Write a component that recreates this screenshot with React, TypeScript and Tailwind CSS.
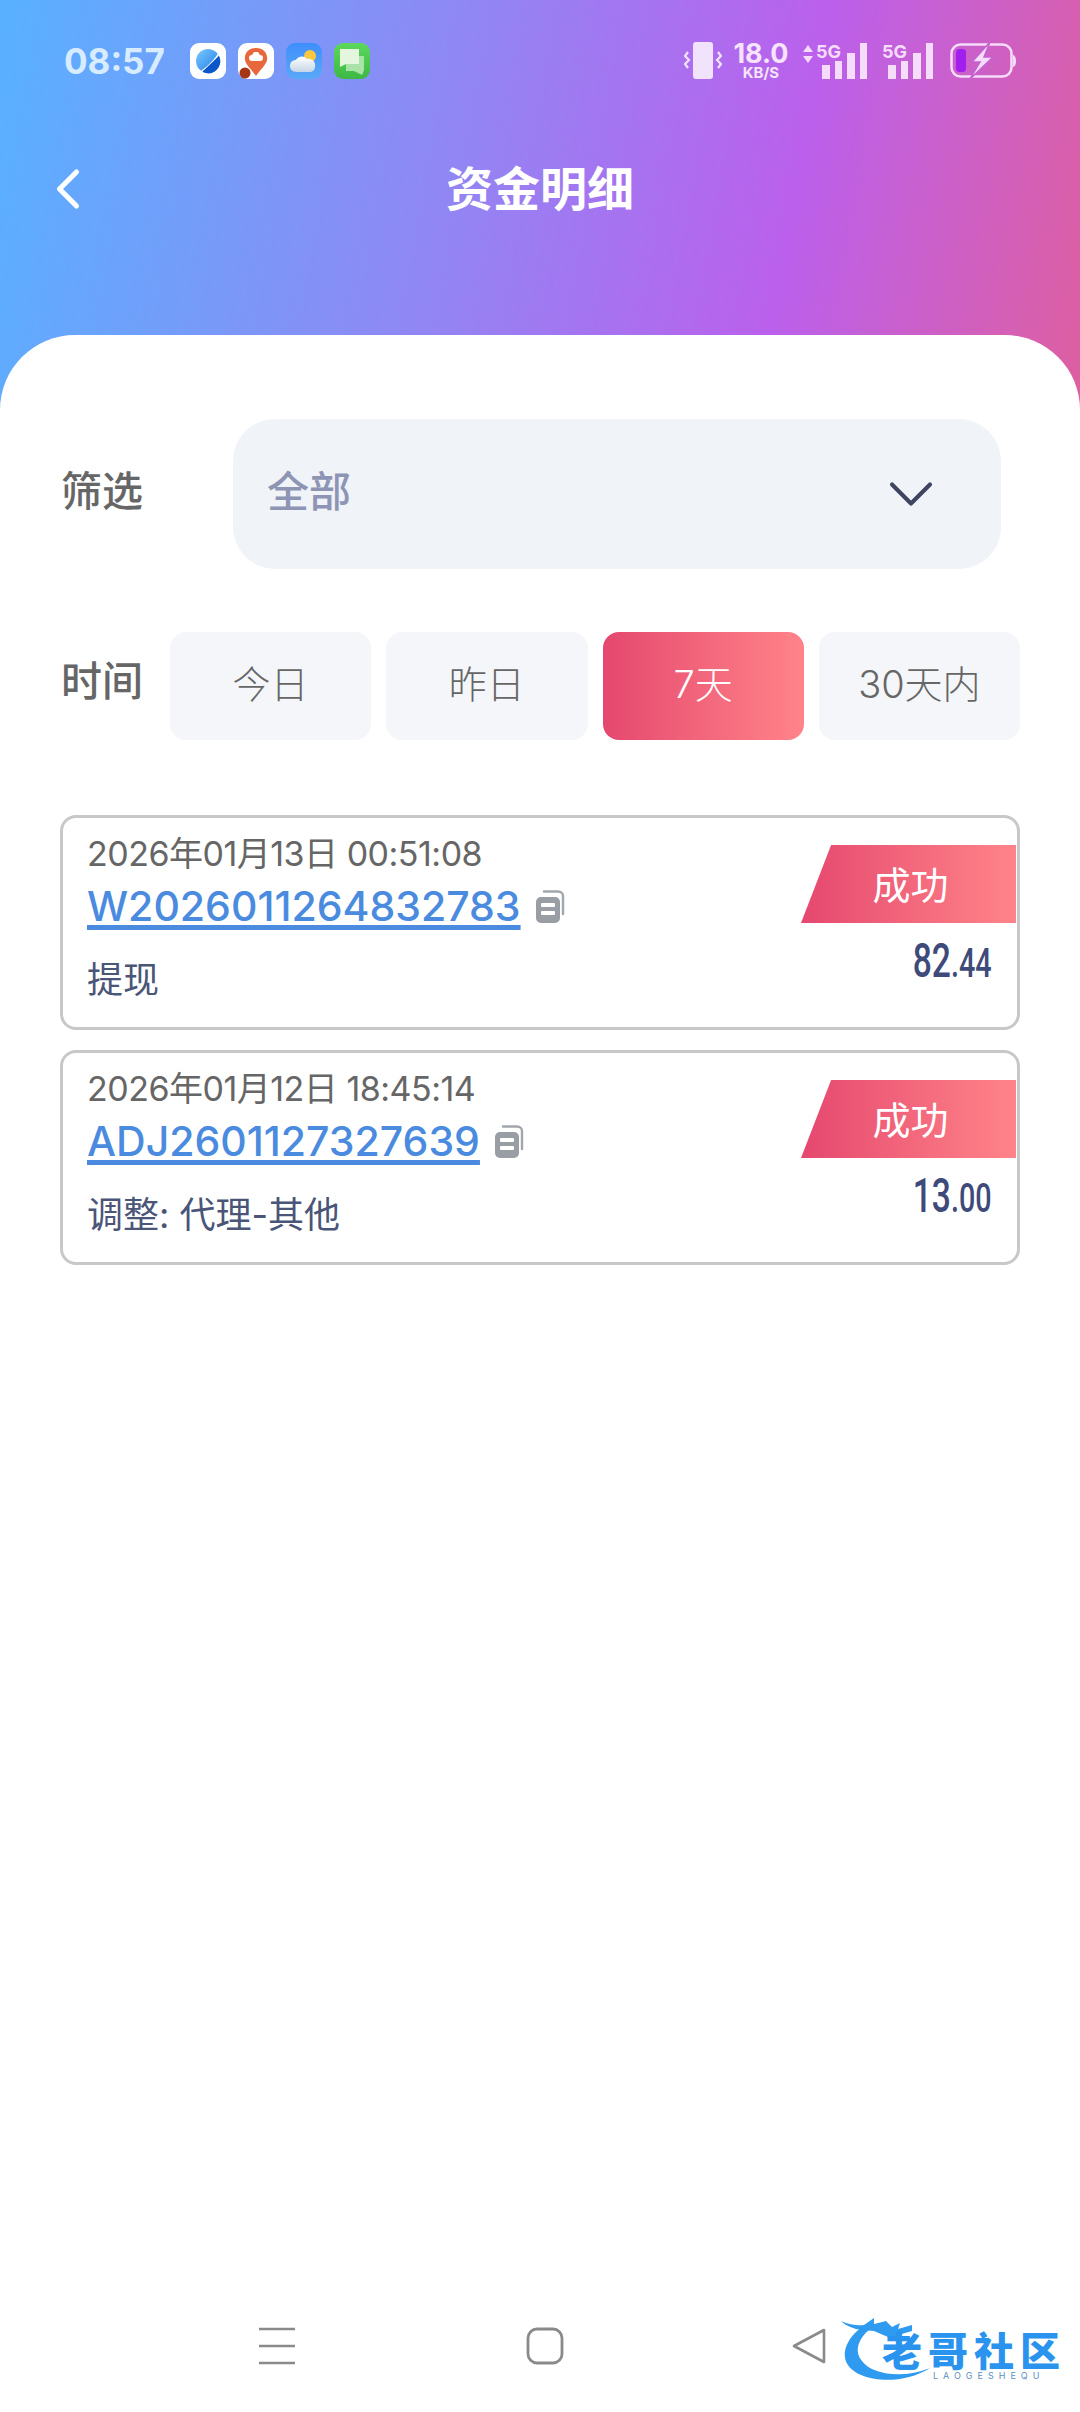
import { ChevronDown, ChevronLeft } from 'lucide-react';

const records = [
  { time: '2026年01月13日 00:51:08', id: 'W2026011264832783', whole: '82', fraction: '.44', note: '提现' },
  { time: '2026年01月12日 18:45:14', id: 'ADJ2601127327639', whole: '13', fraction: '.00', note: '调整: 代理-其他' },
];

const ranges = ['今日', '昨日', '7天', '30天内'];

function BrowserIcon() {
  return (
    <svg viewBox="0 0 36 36" className="h-[36px] w-[36px]">
      <defs>
        <linearGradient id="planet" x1="0" y1="0" x2="1" y2="1">
          <stop offset="0" stopColor="#7ccafb" />
          <stop offset="1" stopColor="#1a78e8" />
        </linearGradient>
      </defs>
      <rect width="36" height="36" rx="9" fill="#ffffff" />
      <circle cx="18" cy="18" r="12" fill="url(#planet)" />
      <path d="M5 31 C12 30 27 17 31 6" fill="none" stroke="#ffffff" strokeWidth="1.6" />
      <path d="M13 28 L29 13 A12 12 0 0 1 13 29 Z" fill="#0b57c9" />
    </svg>
  );
}

function CarPinIcon() {
  return (
    <svg viewBox="0 0 36 36" className="h-[36px] w-[36px]">
      <rect width="36" height="36" rx="9" fill="#ffffff" />
      <path d="M18 5 C10 5 6 11 7 17 C8 22 14 27 18 33 C22 27 28 22 29 17 C30 11 26 5 18 5 Z" fill="#e8683c" />
      <rect x="11" y="12" width="14" height="6" rx="3" fill="#ffffff" />
      <path d="M14 12 L16 9 H20 L22 12 Z" fill="#ffffff" />
      <circle cx="7" cy="30" r="5.5" fill="#a83416" />
    </svg>
  );
}

function WeatherIcon() {
  return (
    <svg viewBox="0 0 36 36" className="h-[36px] w-[36px]">
      <defs>
        <linearGradient id="sky" x1="0" y1="0" x2="0" y2="1">
          <stop offset="0" stopColor="#3f8ffb" />
          <stop offset="1" stopColor="#5aa8f8" />
        </linearGradient>
        <linearGradient id="cloud" x1="0" y1="0" x2="0" y2="1">
          <stop offset="0" stopColor="#ffffff" />
          <stop offset="1" stopColor="#c6d6e4" />
        </linearGradient>
      </defs>
      <rect width="36" height="36" rx="9" fill="url(#sky)" />
      <circle cx="24" cy="13" r="6" fill="#fbc83f" />
      <path d="M11 29 C6 29 4 26 4 23 C4 19 7 17 10 17 C12 13 18 12 21 16 C26 15 30 19 29 24 C29 27 26 29 24 29 Z" fill="url(#cloud)" />
    </svg>
  );
}

function MessageIcon() {
  return (
    <svg viewBox="0 0 36 36" className="h-[36px] w-[36px]">
      <defs>
        <linearGradient id="msg" x1="0" y1="0" x2="0" y2="1">
          <stop offset="0" stopColor="#5cd85c" />
          <stop offset="1" stopColor="#3db845" />
        </linearGradient>
      </defs>
      <rect width="36" height="36" rx="9" fill="url(#msg)" />
      <path d="M12 13 H30 V27 L28 32 L20 28 H12 Z" fill="#a9e3a8" />
      <path d="M6 6 H25 V21 H12 L6 24 Z" fill="#e4f6de" />
    </svg>
  );
}

function SignalBars() {
  return (
    <svg viewBox="0 0 66 36" className="h-[36px] w-[66px] overflow-visible">
      <text x="0" y="15" fontSize="18" fontWeight="700" fill="#f6dcfb" fontFamily="Inter, sans-serif">5G</text>
      <rect x="6" y="22" width="8" height="14" fill="#f6dcfb" />
      <rect x="19" y="18" width="7" height="18" fill="#f6dcfb" />
      <rect x="31" y="10" width="8" height="26" fill="#f6dcfb" />
      <rect x="44" y="0" width="7" height="36" fill="#f6dcfb" />
    </svg>
  );
}

function StatusRight() {
  return (
    <div className="flex items-center">
      <svg viewBox="0 0 38 38" className="h-[38px] w-[38px]">
        <rect x="9" y="0" width="20" height="37" rx="3" fill="#f1e3fb" />
        <path d="M4 10 L1 14 L5 18 L1 22 L4 26" fill="none" stroke="#f1e3fb" strokeWidth="2.2" />
        <path d="M34 10 L37 14 L33 18 L37 22 L34 26" fill="none" stroke="#f1e3fb" strokeWidth="2.2" />
      </svg>
      <div className="ml-[11px] flex w-[56px] flex-col items-center font-bold text-[#f6e4fb]">
        <span className="text-[27px] leading-[24px]">18.0</span>
        <span className="text-[15px] leading-[14px]">KB/S</span>
      </div>
      <svg viewBox="0 0 12 18" className="mb-[14px] ml-[13px] h-[18px] w-[12px]">
        <path d="M6 0 L11 7 H1 Z M6 18 L1 11 H11 Z" fill="#f6dcfb" />
      </svg>
      <div className="ml-[2px]">
        <SignalBars />
      </div>
      <SignalBars />
      <svg viewBox="0 0 68 36" className="ml-[2px] h-[36px] w-[68px]">
        <rect x="1.5" y="1.5" width="60" height="32" rx="9" fill="none" stroke="#f6dcfb" strokeWidth="2.5" />
        <rect x="6" y="6" width="10" height="23" rx="3.5" fill="#a31ff0" />
        <path d="M63 12 C67 12 67 24 63 24 Z" fill="#f6dcfb" />
        <path d="M40 -1 L22 19 H30 L20 36 L43 14 H34 Z" fill="#f6dcfb" stroke="#c364d0" strokeWidth="1.5" />
      </svg>
    </div>
  );
}

function CopyIcon() {
  return (
    <svg viewBox="0 0 29 34" className="h-[34px] w-[29px] shrink-0">
      <path d="M8 2.5 H22 C25 2.5 27 4.5 27 7 V25" fill="none" stroke="#a2a6ac" strokeWidth="2.4" strokeLinecap="round" />
      <rect x="0" y="8" width="24" height="26" rx="5" fill="#999da4" />
      <rect x="5" y="14" width="14" height="4" rx="1" fill="#ffffff" />
      <rect x="5" y="22" width="14" height="4" rx="1" fill="#ffffff" />
    </svg>
  );
}

function RecordCard({ time, id, whole, fraction, note }: (typeof records)[number]) {
  return (
    <div className="flex h-[215px] justify-between rounded-[16px] border-[3px] border-[#c8c8c8] pr-px pl-[24px]">
      <div className="pt-[16px]">
        <div className="text-[34px] leading-[40px] tracking-[-0.5px] whitespace-nowrap text-[#666666]">{time}</div>
        <div className="mt-[7px] flex items-center gap-[15px]">
          <span className="text-[41px] leading-[50px] font-medium whitespace-nowrap text-[#4a8be0] underline decoration-[5px] underline-offset-[4px]">{id}</span>
          <CopyIcon />
        </div>
        <div className="mt-[27px] text-[36px] leading-[44px] text-[#4a5578]">{note}</div>
      </div>
      <div className="flex flex-col items-end pt-[27px]">
        <div className="flex h-[78px] w-[215px] items-center justify-center bg-gradient-to-r from-[#e5476f] to-[#ff8389] pt-[3px] pl-[4px] text-[38px] text-white [clip-path:polygon(14%_0,100%_0,100%_100%,0_100%)]">
          成功
        </div>
        <div className="mt-[10px] mr-[24px] origin-right scale-x-[0.7] font-['Roboto',sans-serif] font-medium whitespace-nowrap text-[#3d4a7a]">
          <span className="text-[48px] leading-[56px]">{whole}</span>
          <span className="text-[41px] leading-[56px]">{fraction}</span>
        </div>
      </div>
    </div>
  );
}

function Watermark() {
  return (
    <div className="absolute top-[2315px] left-[840px] h-[80px] w-[230px]">
      <svg viewBox="0 0 100 75" className="absolute top-0 left-0 h-[75px] w-[100px]">
        <path d="M22 12 C8 22 0 38 8 50 C18 66 60 72 90 53 C64 64 32 60 22 46 C14 36 18 24 30 14 Z" fill="#2f9bf0" />
        <path d="M1 6 C10 10 18 11 24 10 L34 3 L34 9 L46 6 L52 12 L60 8 L58 14 L72 10 L72 16 L58 20 L62 26 L48 22 L34 16 L22 15 C14 14 6 11 1 6 Z" fill="#2f9bf0" />
      </svg>
      <div className="absolute top-[20px] left-[42px] text-[40px] leading-[34px] font-black tracking-[6px] whitespace-nowrap text-[#2a93ee]">老哥社区</div>
      <div className="absolute top-[56px] left-[93px] text-[9px] leading-[10px] tracking-[5px] whitespace-nowrap text-[#5b8fc4]">LAOGESHEQU</div>
    </div>
  );
}

export default function App() {
  return (
    <div className="relative flex h-[2412px] w-[1080px] flex-col overflow-hidden bg-white font-['Inter','Noto_Sans_CJK_SC',sans-serif]">
      <div className="h-[415px] shrink-0 bg-[linear-gradient(100deg,#58b1ff_0%,#8f88f4_40%,#bb60ec_72%,#de5fa0_100%)]">
        <div className="flex h-[122px] items-center justify-between pr-[62px] pl-[64px]">
          <div className="flex items-center">
            <span className="w-[126px] text-[35px] font-bold text-[#d8ecff]">08:57</span>
            <div className="flex gap-[12px]">
              <BrowserIcon />
              <CarPinIcon />
              <WeatherIcon />
              <MessageIcon />
            </div>
          </div>
          <StatusRight />
        </div>

        <div className="relative flex h-[134px] items-center justify-center">
          <ChevronLeft className="absolute left-[34px] h-[68px] w-[68px] text-white" strokeWidth={1.8} />
          <span className="text-[47px] font-semibold text-white">资金明细</span>
        </div>
      </div>

      <div className="relative -mt-[80px] flex flex-1 flex-col rounded-t-[75px] bg-white pt-[84px]">
        <div className="flex items-center pr-[79px] pl-[61px]">
          <span className="w-[172px] pb-[5px] text-[41px] font-medium text-[#666666]">筛选</span>
          <div className="flex h-[150px] flex-1 items-center justify-between rounded-[42px] bg-[#f0f3f8] pr-[52px] pl-[34px]">
            <span className="pb-[5px] text-[42px] font-medium text-[#8e95b4]">全部</span>
            <ChevronDown className="h-[76px] w-[76px] text-[#3f4560]" strokeWidth={1.3} />
          </div>
        </div>

        <div className="mt-[63px] flex items-center pr-[60px] pl-[61px]">
          <span className="w-[109px] pb-[8px] text-[41px] font-medium text-[#666666]">时间</span>
          <div className="flex flex-1 gap-[15px]">
            {ranges.map((range) => (
              <div
                key={range}
                className={`flex h-[108px] flex-1 items-center justify-center rounded-[16px] pb-[3px] text-[38px] font-light ${
                  range === '7天'
                    ? 'bg-gradient-to-r from-[#e5476f] to-[#ff8389] text-white'
                    : 'bg-[#f5f6f9] text-[#666666]'
                }`}
              >
                {range}
              </div>
            ))}
          </div>
        </div>

        <div className="mt-[75px] flex flex-col gap-[20px] px-[60px]">
          {records.map((record) => (
            <RecordCard key={record.id} {...record} />
          ))}
        </div>

        <div className="mt-auto mb-[46px] flex h-[40px] items-center pl-[258px]">
          <svg viewBox="0 0 38 38" className="h-[38px] w-[38px]">
            <path d="M1 2 H37 M1 19 H37 M1 36 H37" stroke="#8a8a8a" strokeWidth="2.6" />
          </svg>
          <svg viewBox="0 0 38 38" className="ml-[230px] h-[38px] w-[38px]">
            <rect x="2" y="2" width="34" height="34" rx="9" fill="none" stroke="#8a8a8a" strokeWidth="2.8" />
          </svg>
          <svg viewBox="0 0 36 38" className="ml-[227px] h-[38px] w-[36px]">
            <path d="M33 3 V35 L3 19 Z" fill="none" stroke="#8a8a8a" strokeWidth="2.6" strokeLinejoin="round" />
          </svg>
        </div>
      </div>

      <Watermark />
    </div>
  );
}
